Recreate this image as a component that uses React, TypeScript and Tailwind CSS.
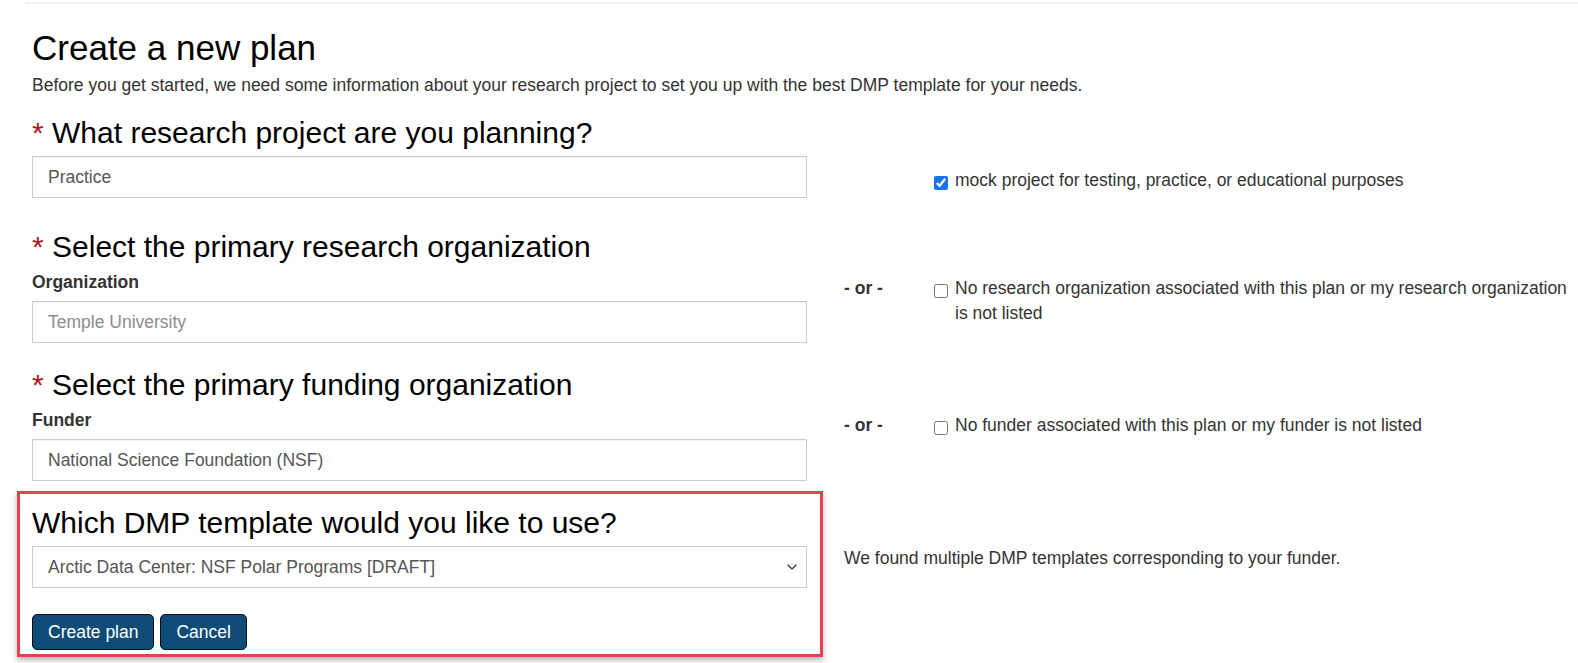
import React from 'react';
import { ChevronDown } from 'lucide-react';

const Req: React.FC<{ children: React.ReactNode; className?: string }> = ({ children, className }) => (
  <h2 className={`text-[30px] leading-[34px] text-black font-normal ${className ?? ''}`}>
    <span className="text-[#b0171f]">*</span> {children}
  </h2>
);

const Field: React.FC<{ value: string; muted?: boolean }> = ({ value, muted }) => (
  <div
    className={`h-[42px] w-[775px] border border-[#cccccc] shadow-[inset_0_1px_1px_rgba(0,0,0,0.06)] flex items-center pl-[15px] text-[17.5px] ${
      muted ? 'text-[#8c8c8c]' : 'text-[#555555]'
    }`}
  >
    {value}
  </div>
);

const Check: React.FC<{ checked?: boolean; children: React.ReactNode }> = ({ checked, children }) => (
  <label className="flex items-start gap-[7px] text-[17.5px] leading-[25px] text-[#333333]">
    <input
      type="checkbox"
      defaultChecked={checked}
      className="mt-[8px] m-0 w-[14px] h-[14px] shrink-0 accent-[#1a73e8]"
    />
    <span>{children}</span>
  </label>
);

const Or: React.FC = () => (
  <div className="w-[90px] shrink-0 text-[17.5px] leading-[25px] font-bold text-[#333333]">- or -</div>
);

export default function App() {
  return (
    <div className="min-h-[663px] w-full bg-white font-['Liberation_Sans',Arial,sans-serif] text-[#333333]">
      {/* top divider */}
      <div className="pt-[2px] pl-[25px]">
        <div className="h-[2px] bg-[#eeeeee]" />
      </div>

      <div className="pl-[32px]">
        <h1 className="mt-[25px] text-[35px] leading-[38px] text-black font-normal">Create a new plan</h1>
        <p className="mt-[6px] text-[17.5px] leading-[24px]">
          Before you get started, we need some information about your research project to set you up with the best DMP
          template for your needs.
        </p>

        {/* project */}
        <div className="mt-[19px] flex">
          <div className="w-[775px] shrink-0">
            <Req>What research project are you planning?</Req>
            <div className="mt-[6px]">
              <Field value="Practice" />
            </div>
          </div>
          <div className="ml-[37px] mt-[52px] flex">
            <div className="w-[90px] shrink-0" />
            <Check checked>mock project for testing, practice, or educational purposes</Check>
          </div>
        </div>

        {/* organization */}
        <div className="mt-[32px] flex">
          <div className="w-[775px] shrink-0">
            <Req>Select the primary research organization</Req>
            <div className="mt-[7px] text-[17.5px] leading-[22px] font-bold text-[#333333]">Organization</div>
            <div className="mt-[8px]">
              <Field value="Temple University" muted />
            </div>
          </div>
          <div className="ml-[37px] mt-[46px] flex flex-1 pr-[6px]">
            <Or />
            <Check>
              No research organization associated with this plan or my research organization is not listed
            </Check>
          </div>
        </div>

        {/* funder */}
        <div className="mt-[25px] flex">
          <div className="w-[775px] shrink-0">
            <Req>Select the primary funding organization</Req>
            <div className="mt-[7px] text-[17.5px] leading-[22px] font-bold text-[#333333]">Funder</div>
            <div className="mt-[8px]">
              <Field value="National Science Foundation (NSF)" />
            </div>
          </div>
          <div className="ml-[37px] mt-[45px] flex">
            <Or />
            <Check>No funder associated with this plan or my funder is not listed</Check>
          </div>
        </div>

        {/* template */}
        <div className="mt-[10px] flex">
          <div className="-ml-[15px] w-[806px] shrink-0 border-[3px] border-[#e5434f] shadow-[0_3px_6px_rgba(0,0,0,0.3)] pl-[12px] pr-[13px] pt-[12px] pb-[4px]">
            <h2 className="text-[30px] leading-[34px] text-black font-normal">Which DMP template would you like to use?</h2>
            <div className="mt-[6px] h-[42px] w-[775px] border border-[#cccccc] flex items-center justify-between pl-[15px] pr-[6px] text-[17.5px] text-[#555555]">
              <span>Arctic Data Center: NSF Polar Programs [DRAFT]</span>
              <ChevronDown size={16} strokeWidth={2.2} className="text-[#444444]" />
            </div>
            <div className="mt-[26px] flex gap-[6px]">
              <button className="h-[36px] px-[15px] rounded-[5px] border border-[#111111] bg-[#0e4c77] text-white text-[17.5px]">
                Create plan
              </button>
              <button className="h-[36px] px-[15px] rounded-[5px] border border-[#111111] bg-[#0e4c77] text-white text-[17.5px]">
                Cancel
              </button>
            </div>
          </div>
          <div className="ml-[21px] mt-[55px] text-[17.5px] leading-[25px] text-[#333333]">
            We found multiple DMP templates corresponding to your funder.
          </div>
        </div>
      </div>
    </div>
  );
}
